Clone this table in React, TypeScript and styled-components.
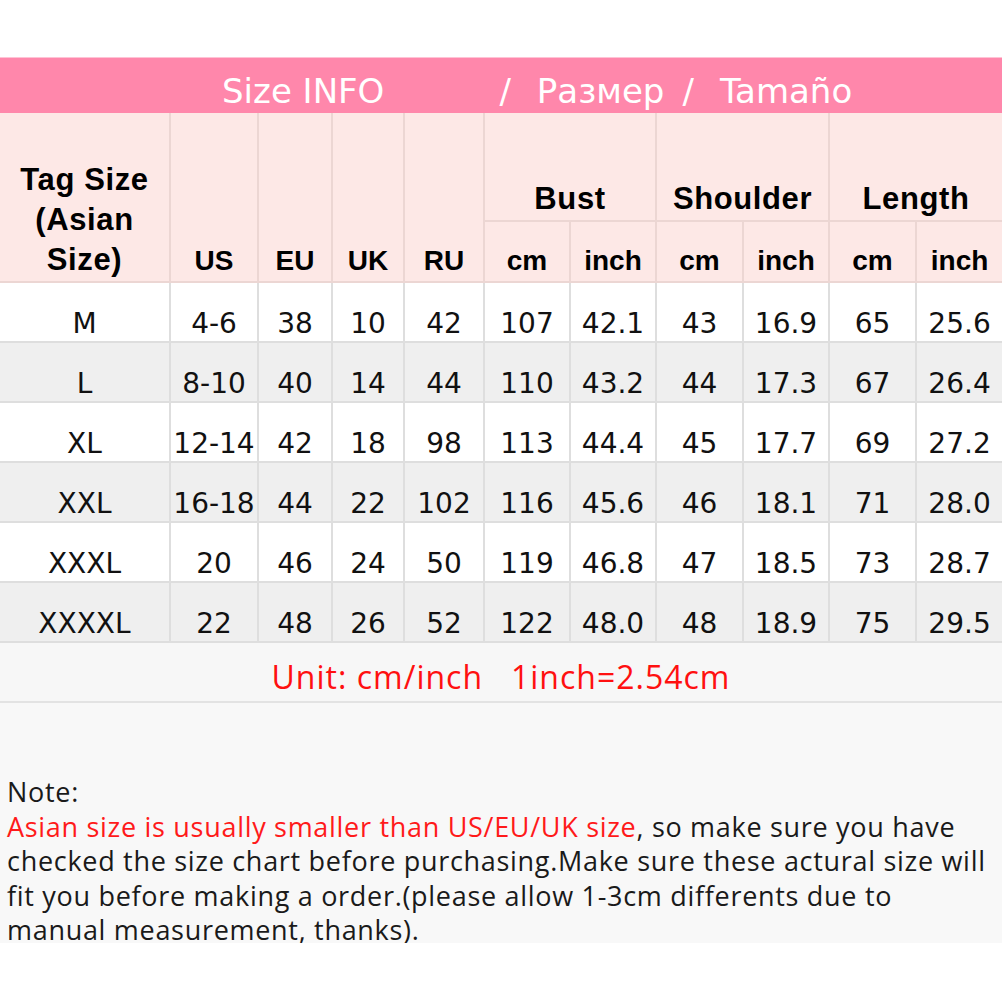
import React from 'react';
import styled, { createGlobalStyle } from 'styled-components';

const GlobalStyle = createGlobalStyle`
  html, body {
    margin: 0;
    padding: 0;
    background: #ffffff;
  }
  body {
    font-family: "DejaVu Sans", Verdana, sans-serif;
  }
`;

const Page = styled.div`
  width: 1002px;
  padding-top: 57px;
`;

const Banner = styled.div`
  display: flex;
  align-items: flex-end;
  height: 56px;
  box-sizing: border-box;
  padding: 0 0 5px 222px;
  background: #ff87ab;
  border-top: 1px solid #ffc3d5;
  color: #ffffff;
  font-family: "DejaVu Sans", Verdana, sans-serif;
  font-size: 34px;
  line-height: 34px;
  white-space: nowrap;
`;

const BannerPart = styled.span<{ $space: number }>`
  margin-right: ${({ $space }) => `${$space}px`};
`;

const Table = styled.table`
  width: 1002px;
  table-layout: fixed;
  border-collapse: collapse;
`;

const HeadCell = styled.th<{ $sub?: boolean; $h?: number }>`
  background: #fde8e6;
  border: 2px solid #ecd6d3;
  border-top: none;
  color: #000000;
  font-family: "Liberation Sans", Arial, sans-serif;
  font-weight: bold;
  font-size: ${({ $sub }) => ($sub ? '28px' : '31px')};
  letter-spacing: ${({ $sub }) => ($sub ? '0' : '0.6px')};
  line-height: 40px;
  text-align: center;
  vertical-align: bottom;
  padding: 0 0 ${({ $sub }) => ($sub ? '0' : '1px')};
  height: ${({ $h }) => ($h ? `${$h}px` : 'auto')};
  box-sizing: border-box;
  &:first-child {
    border-left: none;
  }
  &:last-child {
    border-right: none;
  }
`;

const Row = styled.tr<{ $shade: boolean }>`
  height: 60px;
  background: ${({ $shade }) => ($shade ? '#efefef' : '#ffffff')};
`;

const Cell = styled.td`
  border: 2px solid #dedede;
  font-family: "DejaVu Sans", Verdana, sans-serif;
  font-size: 28px;
  line-height: 32px;
  color: #111111;
  text-align: center;
  vertical-align: bottom;
  padding: 0 0 1px;
  white-space: nowrap;
  &:first-child {
    border-left: none;
  }
  &:last-child {
    border-right: none;
  }
`;

const UnitBar = styled.div`
  height: 60px;
  box-sizing: border-box;
  display: flex;
  align-items: center;
  justify-content: center;
  padding-top: 9px;
  background: #f7f7f7;
  border-bottom: 2px solid #e3e3e3;
  color: #ff1010;
  font-family: "Open Sans", "Noto Sans", sans-serif;
  font-size: 32px;
  letter-spacing: 1px;
  white-space: pre;
`;

const NoteBox = styled.div`
  height: 240px;
  box-sizing: border-box;
  padding: 72px 0 0 7px;
  background: #f8f8f8;
  color: #1a1a1a;
  font-family: "Open Sans", "Noto Sans", sans-serif;
  font-size: 27px;
  letter-spacing: 0.7px;
  line-height: 34.5px;
  white-space: nowrap;
`;

const Red = styled.span`
  color: #ff1a1a;
`;

const colWidths = [170, 88, 74, 72, 80, 86, 86, 87, 86, 87, 86];

const sizes = [
  ['M', '4-6', '38', '10', '42', '107', '42.1', '43', '16.9', '65', '25.6'],
  ['L', '8-10', '40', '14', '44', '110', '43.2', '44', '17.3', '67', '26.4'],
  ['XL', '12-14', '42', '18', '98', '113', '44.4', '45', '17.7', '69', '27.2'],
  ['XXL', '16-18', '44', '22', '102', '116', '45.6', '46', '18.1', '71', '28.0'],
  ['XXXL', '20', '46', '24', '50', '119', '46.8', '47', '18.5', '73', '28.7'],
  ['XXXXL', '22', '48', '26', '52', '122', '48.0', '48', '18.9', '75', '29.5'],
];

const groups = ['Bust', 'Shoulder', 'Length'];

const SizeTable = () => (
  <Table>
    <colgroup>
      {colWidths.map((w, i) => (
        <col key={i} style={{ width: w }} />
      ))}
    </colgroup>
    <thead>
      <tr>
        <HeadCell rowSpan={2}>
          Tag Size
          <br />
          (Asian
          <br />
          Size)
        </HeadCell>
        {['US', 'EU', 'UK', 'RU'].map((c) => (
          <HeadCell key={c} rowSpan={2} $sub>
            {c}
          </HeadCell>
        ))}
        {groups.map((g) => (
          <HeadCell key={g} colSpan={2} $h={108}>
            {g}
          </HeadCell>
        ))}
      </tr>
      <tr>
        {groups.map((g) => (
          <React.Fragment key={g}>
            <HeadCell $sub $h={61}>cm</HeadCell>
            <HeadCell $sub $h={61}>inch</HeadCell>
          </React.Fragment>
        ))}
      </tr>
    </thead>
    <tbody>
      {sizes.map((row, i) => (
        <Row key={row[0]} $shade={i % 2 === 1}>
          {row.map((v, j) => (
            <Cell key={j}>{v}</Cell>
          ))}
        </Row>
      ))}
    </tbody>
  </Table>
);

const App = () => (
  <Page>
    <GlobalStyle />
    <Banner>
      <BannerPart $space={115}>Size INFO</BannerPart>
      <BannerPart $space={26}>/</BannerPart>
      <BannerPart $space={18}>Размер</BannerPart>
      <BannerPart $space={26}>/</BannerPart>
      <BannerPart $space={0}>Tamaño</BannerPart>
    </Banner>
    <SizeTable />
    <UnitBar>{'Unit: cm/inch   1inch=2.54cm'}</UnitBar>
    <NoteBox>
      Note:
      <br />
      <Red>Asian size is usually smaller than US/EU/UK size</Red>, so make sure you have
      <br />
      checked the size chart before purchasing.Make sure these actural size will
      <br />
      fit you before making a order.(please allow 1-3cm differents due to
      <br />
      manual measurement, thanks).
    </NoteBox>
  </Page>
);

export default App;
